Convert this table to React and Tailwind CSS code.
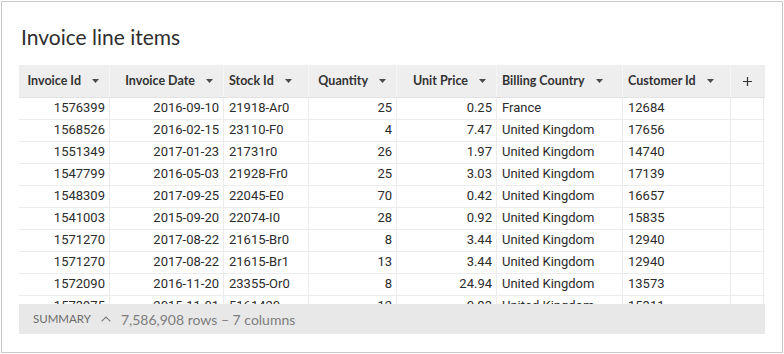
import React from "react";

const cols = [
  { key: "id", label: "Invoice Id", w: 91, align: "right" },
  { key: "date", label: "Invoice Date", w: 114, align: "right" },
  { key: "stock", label: "Stock Id", w: 85, align: "left" },
  { key: "qty", label: "Quantity", w: 88, align: "right" },
  { key: "price", label: "Unit Price", w: 100, align: "right" },
  { key: "country", label: "Billing Country", w: 126, align: "left" },
  { key: "cust", label: "Customer Id", w: 108, align: "left" },
];

const rows = [
  ["1576399", "2016-09-10", "21918-Ar0", "25", "0.25", "France", "12684"],
  ["1568526", "2016-02-15", "23110-F0", "4", "7.47", "United Kingdom", "17656"],
  ["1551349", "2017-01-23", "21731r0", "26", "1.97", "United Kingdom", "14740"],
  ["1547799", "2016-05-03", "21928-Fr0", "25", "3.03", "United Kingdom", "17139"],
  ["1548309", "2017-09-25", "22045-E0", "70", "0.42", "United Kingdom", "16657"],
  ["1541003", "2015-09-20", "22074-I0", "28", "0.92", "United Kingdom", "15835"],
  ["1571270", "2017-08-22", "21615-Br0", "8", "3.44", "United Kingdom", "12940"],
  ["1571270", "2017-08-22", "21615-Br1", "13", "3.44", "United Kingdom", "12940"],
  ["1572090", "2016-11-20", "23355-Or0", "8", "24.94", "United Kingdom", "13573"],
  ["1573975", "2015-11-01", "5161420", "12", "0.83", "United Kingdom", "15311"],
];

function Caret() {
  return (
    <svg width="7" height="4" viewBox="0 0 7 4" className="shrink-0 ml-[11px]">
      <path d="M0 0 L7 0 L3.5 4 Z" fill="#4a4a4a" />
    </svg>
  );
}

export default function App() {
  return (
    <div className="w-[784px] h-[354px] p-px bg-white" style={{ fontFamily: "Lato, 'Liberation Sans', sans-serif" }}>
      <div className="w-full h-full border border-[#c9c9c9] px-[17px] pt-[21px] flex flex-col">
        <div className="text-[21px] leading-[28px] text-[#2e2e2e] pl-[2px]">Invoice line items</div>
        <div className="mt-[14px] flex flex-col">
          {/* header */}
          <div className="flex h-[33px] bg-[#eeeeee] border-b border-[#e2e2e2]">
            {cols.map((c) => (
              <div
                key={c.key}
                style={{ width: c.w }}
                className={
                  "flex items-center border-r border-[#f6f6f6] text-[12.5px] font-bold text-[#333] " +
                  (c.align === "right" ? "justify-end pr-[10px] pl-[6px]" : "justify-start pl-[5px] pr-[10px]")
                }
              >
                <span className="whitespace-nowrap">{c.label}</span>
                <Caret />
              </div>
            ))}
            <div className="w-[33px] flex items-center justify-center">
              <svg width="9" height="9" viewBox="0 0 9 9">
                <path d="M4.5 0 V9 M0 4.5 H9" stroke="#333" strokeWidth="1.2" />
              </svg>
            </div>
          </div>
          {/* body */}
          <div className="h-[206px] overflow-hidden" style={{ fontFamily: "Roboto, 'Liberation Sans', sans-serif" }}>
            {rows.map((r, i) => (
              <div key={i} className="flex h-[22px] border-b border-[#ececec]">
                {cols.map((c, j) => (
                  <div
                    key={c.key}
                    style={{ width: c.w }}
                    className={
                      "border-r border-[#ececec] text-[13px] leading-[17px] pt-[1px] text-[#2c2c2c] whitespace-nowrap " +
                      (c.align === "right" ? "text-right pr-[4px]" : "text-left pl-[5px]")
                    }
                  >
                    {r[j]}
                  </div>
                ))}
                <div className="w-[33px] border-r border-[#ececec]" />
              </div>
            ))}
          </div>
          {/* summary */}
          <div className="h-[30px] bg-[#e8e8e8] flex items-center pl-[14px]">
            <span className="text-[11.5px] text-[#6b6b6b]">SUMMARY</span>
            <svg width="10" height="6" viewBox="0 0 10 6" className="ml-[10px]">
              <path d="M0.6 5.4 L5 1 L9.4 5.4" fill="none" stroke="#7a7a7a" strokeWidth="1.1" />
            </svg>
            <span className="ml-[10px] text-[14px] text-[#7d7d7d]">7,586,908 rows – 7 columns</span>
          </div>
        </div>
      </div>
    </div>
  );
}
